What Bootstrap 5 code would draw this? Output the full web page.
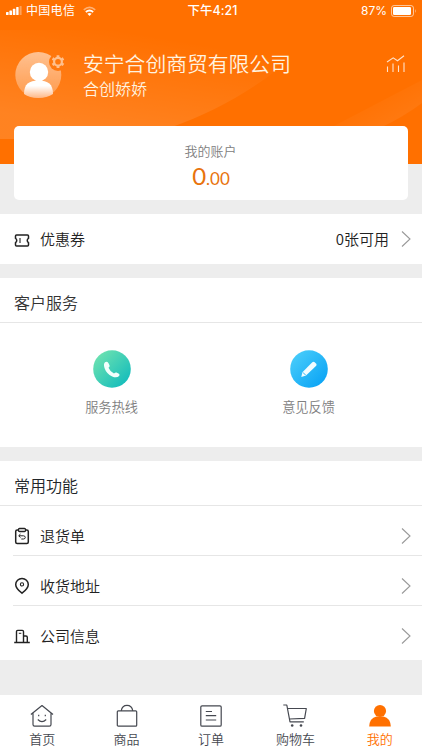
<!DOCTYPE html>
<html lang="zh-CN">
<head>
<meta charset="utf-8">
<meta name="viewport" content="width=device-width, initial-scale=1">
<title>我的</title>
<link href="https://cdn.jsdelivr.net/npm/bootstrap@5.3.0/dist/css/bootstrap.min.css" rel="stylesheet">
<style>
:root{--brand:#ff7000;--line:#e6e6e6;}
body{font-family:"Noto Sans CJK SC",sans-serif;background:#ededed;color:#333;height:750px;overflow:hidden;font-size:15px;line-height:1;font-weight:350}
svg{display:block;flex:none}
.hero{height:164px;background:var(--brand);color:#fff}
.hero-art{z-index:0}
.status{height:22px;padding:0 5px 0 6px;font-size:12px;font-weight:400;font-family:Inter,"Noto Sans CJK SC",sans-serif}
.status .side{width:33.33%}
.carrier{letter-spacing:.3px}
.clock{font-size:12.4px;font-weight:500;letter-spacing:.1px;padding-left:2px}
.profile{margin-top:29px;padding:0 16px 0 14px}
.names{margin-left:15px;margin-top:-1px}
.corp{font-size:20.8px;line-height:26px;color:#fff3e0}
.person{font-size:16px;line-height:24px;color:#fff3e0}
.account{height:74px;margin:-38px 14px 0;border-radius:5px;padding-top:16px}
.account-label{font-size:13px;line-height:18px;color:#808080;padding-right:1px}
.amount{color:#e8730c;font-family:Lato,sans-serif;font-size:24px;line-height:32px;font-weight:400}
.amount small{font-size:17px}
.coupon{height:50px;margin-top:14px}
.line-item{padding:0 10px 0 14px;color:#222}
.lift{position:relative;top:-1px}
.lead-icon{margin-right:10px}
.panel{margin-top:14px}
.panel-title{height:45px;padding:6px 14px 0;font-size:16px;line-height:37px;border-bottom:1px solid var(--line);font-weight:350}
.services{height:124px;padding:27px 15px 0 13px}
.services .caption{font-size:13.2px;line-height:18px;color:#808080;margin-top:10px}
.fn-row{height:50px;margin-left:13px;padding:11px 10px 0 1px;border-bottom:1px solid var(--line);color:#222}
.fn-row span,.coupon span{margin-bottom:1px}
.fn-row:last-child{border:0;height:54px;padding-bottom:5px}
.tabs{height:55px;color:#454850}
.tabs .tab{padding-top:9px;font-size:13px}
.tabs .tab span{line-height:18px;margin-top:2px}
.tabs .on{color:var(--brand)}
</style>
<script src="https://cdn.jsdelivr.net/npm/bootstrap@5.3.0/dist/js/bootstrap.bundle.min.js"></script>
</head>
<body class="d-flex flex-column">
<header class="hero position-relative">
  <svg class="hero-art position-absolute top-0 start-0" width="422" height="164" viewBox="0 0 422 164">
    <defs>
      <linearGradient id="swoosh" x1="1" y1="0" x2=".5" y2="1"><stop offset=".25" stop-color="#fff" stop-opacity="0"/><stop offset="1" stop-color="#fff" stop-opacity=".13"/></linearGradient>
      <linearGradient id="corner" x1="1" y1="1" x2="0" y2="0"><stop offset="0" stop-color="#fff" stop-opacity=".09"/><stop offset=".7" stop-color="#fff" stop-opacity="0"/></linearGradient>
    </defs>
    <path d="M0 30H320C280 75 225 108 172 127V139H0Z" fill="url(#swoosh)"/>
    <path d="M422 103Q405 116 380 128H330L422 80Z" fill="url(#corner)"/>
  </svg>
  <div class="status d-flex align-items-center position-relative">
    <div class="side d-flex align-items-center">
      <svg width="16" height="10" viewBox="0 0 16 10" fill="#fff"><rect y="6" width="2.6" height="3" rx=".6"/><rect x="3.4" y="4.6" width="2.6" height="4.4" rx=".6"/><rect x="6.8" y="2.8" width="2.6" height="6.2" rx=".6"/><rect x="10.2" y="1" width="2.4" height="8" rx=".6"/><rect x="13.6" y="0" width="2" height="9" rx=".6" opacity=".35"/></svg>
      <span class="carrier ms-1">中国电信</span>
      <svg class="ms-2" width="13" height="11" viewBox="0 0 13 11" fill="none" stroke="#fff" stroke-width="1.7"><path d="M.8 3.8Q6.5-1 12.2 3.8" opacity=".45"/><path d="M2.8 6Q6.5 3 10.2 6"/><path d="M4.4 7.7Q6.5 6.2 8.6 7.7L6.5 10Z" fill="#fff" stroke="none"/></svg>
    </div>
    <div class="clock flex-fill text-center">下午4:21</div>
    <div class="side d-flex align-items-center justify-content-end">
      <span class="me-1">87%</span>
      <svg width="26" height="12" viewBox="0 0 26 12"><rect x=".5" y=".5" width="22" height="11" rx="2.6" fill="none" stroke="#fff" stroke-opacity=".6"/><rect x="2" y="2" width="18" height="8" rx="1.2" fill="#fff"/><path d="M24 4Q25.6 6 24 8Z" fill="#fff" opacity=".6"/></svg>
    </div>
  </div>
  <div class="profile d-flex position-relative">
    <svg width="54" height="50" viewBox="0 0 54 50">
      <defs>
        <linearGradient id="disc" x1="0" y1="0" x2="0" y2="1"><stop offset="0" stop-color="#fff" stop-opacity=".55"/><stop offset="1" stop-color="#fff" stop-opacity=".22"/></linearGradient>
        <linearGradient id="bust" x1="0" y1="0" x2="0" y2="1"><stop offset="0" stop-color="#fff"/><stop offset=".3" stop-color="#fff"/><stop offset="1" stop-color="#ffb887"/></linearGradient>
        <mask id="bite"><rect width="54" height="50" fill="#fff"/><circle cx="44" cy="11" r="9" fill="#000"/></mask>
      </defs>
      <g mask="url(#bite)"><circle cx="24.3" cy="24" r="23" fill="url(#disc)"/></g>
      <path d="M10 43C10 33 15 29.5 24.5 29.5S39 33 39 43Q33 47 24.3 47T10 43Z" fill="url(#bust)"/>
      <circle cx="25" cy="21" r="9.2" fill="#fff"/>
      <g fill="none" stroke="#ffc08e" transform="translate(44 10.7)"><circle r="3.9" stroke-width="2.2"/><path stroke-width="2.8" d="M0-4.4V-6.4M0 4.4V6.4M3.8-2.2L5.5-3.2M3.8 2.2L5.5 3.2M-3.8-2.2L-5.5-3.2M-3.8 2.2L-5.5 3.2"/></g>
    </svg>
    <div class="names flex-fill">
      <div class="corp">安宁合创商贸有限公司</div>
      <div class="person">合创娇娇</div>
    </div>
    <svg class="mt-1" width="20" height="18" viewBox="0 0 20 18" fill="none" stroke="#ffe3cc" stroke-width="1.1"><path d="M1 7L7.2 2.8 11.5 5.7 18 .8M1.5 11.5V17M7 8.5V17M12.5 10.5V17M18 7.5V17"/></svg>
  </div>
</header>

<section class="account bg-white text-center position-relative">
  <div class="account-label">我的账户</div>
  <div class="amount">0<small>.00</small></div>
</section>

<section class="coupon line-item bg-white d-flex align-items-center">
  <svg class="lead-icon mt-1" width="16" height="14" viewBox="0 0 16 14" fill="none" stroke="#222" stroke-width="1.5"><path d="M2.5 1H13.5Q14.5 1 14.5 2V4.3Q12 6.5 14.5 8.7V11Q14.5 12 13.5 12H2.5Q1.5 12 1.5 11V8.7Q4 6.5 1.5 4.3V2Q1.5 1 2.5 1Z"/><path d="M6 4V9" stroke-width="1.1"/></svg>
  <span>优惠券</span>
  <span class="ms-auto me-2 pe-1">0张可用</span>
  <svg width="11" height="18" viewBox="0 0 11 18" fill="none" stroke="#999" stroke-width="1.1"><path d="M1 1.5L9 9 1 16.5"/></svg>
</section>

<section class="panel bg-white">
  <h2 class="panel-title m-0">客户服务</h2>
  <div class="services row g-0 m-0 text-center">
    <div class="col-6 d-flex flex-column align-items-center">
      <svg width="38" height="38" viewBox="0 0 38 38"><defs><linearGradient id="mint" x1="0" y1="0" x2="1" y2="1"><stop offset=".1" stop-color="#6de2b0"/><stop offset=".9" stop-color="#13bcbc"/></linearGradient></defs><circle cx="19" cy="19" r="18.8" fill="url(#mint)"/><path d="M12 12.3Q14.1 11 15.4 13.1L16.6 15.4Q16.9 16.6 15.5 17.8Q17 21.6 21 23.4Q22.3 22.2 23.5 22.5L25.9 23.8Q27.2 24.8 26.1 26Q23.6 28.4 19.2 26.4Q13.4 23.8 11.5 18Q10.2 14 12 12.3Z" fill="#f2fffc"/></svg>
      <div class="caption">服务热线</div>
    </div>
    <div class="col-6 d-flex flex-column align-items-center">
      <svg width="38" height="38" viewBox="0 0 38 38"><defs><linearGradient id="sky" x1="0" y1="0" x2="1" y2="1"><stop offset=".1" stop-color="#48ccfa"/><stop offset=".9" stop-color="#0ba4f5"/></linearGradient></defs><circle cx="19" cy="19" r="18.8" fill="url(#sky)"/><path d="M22.3 12.3Q23.5 11.2 24.7 12.3L26.2 13.8Q27 14.7 26.2 15.7L16 25.5 11.3 27 12.4 22.2Z" fill="#f2fcff"/><path d="M12.8 22.3L15.7 25.2" stroke="#2cb6f7" stroke-width="1"/></svg>
      <div class="caption">意见反馈</div>
    </div>
  </div>
</section>

<section class="panel bg-white">
  <h2 class="panel-title m-0 text-dark">常用功能</h2>
  <div class="fn-row d-flex align-items-center">
    <svg class="lead-icon" width="16" height="18" viewBox="0 0 16 18" fill="none" stroke="#222" stroke-width="1.5"><rect x="1.7" y="3" width="12.6" height="13.5" rx="1.5"/><rect x="4.5" y="1.5" width="7" height="3" rx="1" fill="#fff" stroke-width="1.3"/><path d="M6.5 7L4.7 8.8 6.5 10.6M5 8.8H9.5Q11.3 9 11.3 10.4T9.5 12H7.3" stroke-width="1"/></svg>
    <span>退货单</span>
    <svg class="ms-auto" width="11" height="18" viewBox="0 0 11 18" fill="none" stroke="#999" stroke-width="1.1"><path d="M1 1.5L9 9 1 16.5"/></svg>
  </div>
  <div class="fn-row d-flex align-items-center">
    <svg class="lead-icon" width="16" height="18" viewBox="0 0 16 18" fill="none" stroke="#222" stroke-width="1.5"><path d="M8 16.2Q1.7 11.5 1.7 7.5A6.3 6.1 0 0 1 14.3 7.5Q14.3 11.5 8 16.2Z"/><circle cx="8" cy="7.4" r="1.6" stroke-width="1.1"/></svg>
    <span>收货地址</span>
    <svg class="ms-auto" width="11" height="18" viewBox="0 0 11 18" fill="none" stroke="#999" stroke-width="1.1"><path d="M1 1.5L9 9 1 16.5"/></svg>
  </div>
  <div class="fn-row d-flex align-items-center">
    <svg class="lead-icon" width="16" height="18" viewBox="0 0 16 18" fill="none" stroke="#222" stroke-width="1.4"><path d="M.2 15.5H15.8M2.5 15.5V4.6Q2.5 3.4 3.7 3.4H8.3Q9.5 3.4 9.5 4.6V15.5M9.5 9H12Q13.3 9 13.3 10.3V15.5"/><path d="M4.8 6.3H7.3" stroke-width="1"/></svg>
    <span>公司信息</span>
    <svg class="ms-auto" width="11" height="18" viewBox="0 0 11 18" fill="none" stroke="#999" stroke-width="1.1"><path d="M1 1.5L9 9 1 16.5"/></svg>
  </div>
</section>

<nav class="tabs bg-white d-flex mt-auto">
  <div class="tab col d-flex flex-column align-items-center">
    <svg width="24" height="24" viewBox="0 0 24 24" fill="none" stroke="#454850" stroke-width="1.2" stroke-linejoin="round"><path d="M.9 10.5L12 1.5 23 10.5M3 9V20.5Q3 22.2 4.6 22.2H19.4Q21 22.2 21 20.5V9M7.8 15.5Q12 19.6 16.2 15.5"/><path d="M8.7 10.8V12.2M15.3 10.8V12.2"/></svg>
    <span>首页</span>
  </div>
  <div class="tab col d-flex flex-column align-items-center">
    <svg width="24" height="24" viewBox="0 0 24 24" fill="none" stroke="#454850" stroke-width="1.2"><rect x="2.3" y="6.8" width="19.4" height="15.4" rx="1"/><path d="M6.2 6.8Q7.2 1.3 12 1.3T17.8 6.8"/></svg>
    <span>商品</span>
  </div>
  <div class="tab col d-flex flex-column align-items-center">
    <svg width="24" height="24" viewBox="0 0 24 24" fill="none" stroke="#454850" stroke-width="1.2"><rect x="1.8" y="1.8" width="20.4" height="20.4" rx="1.3"/><path d="M6.8 7.5H13M6.8 11.7H17.2M6.8 16H17.2"/></svg>
    <span>订单</span>
  </div>
  <div class="tab col d-flex flex-column align-items-center">
    <svg width="24" height="24" viewBox="0 0 24 24" fill="none" stroke="#454850" stroke-width="1.2" stroke-linejoin="round"><path d="M.3 1H3.8L7 17.8H20.8M4.6 4.5H23.3L21.6 14.3 6.2 15"/><g fill="#454850" stroke="none"><circle cx="9.2" cy="21.5" r="1.3"/><circle cx="18" cy="21.5" r="1.3"/></g></svg>
    <span>购物车</span>
  </div>
  <div class="tab on col d-flex flex-column align-items-center">
    <svg width="24" height="24" viewBox="0 0 24 24" fill="#ff7000"><circle cx="12" cy="7" r="6.1"/><path d="M1.2 22.6Q1.5 14 8.5 12.5H15.5Q22.5 14 22.8 22.6Z"/></svg>
    <span>我的</span>
  </div>
</nav>
</body>
</html>
